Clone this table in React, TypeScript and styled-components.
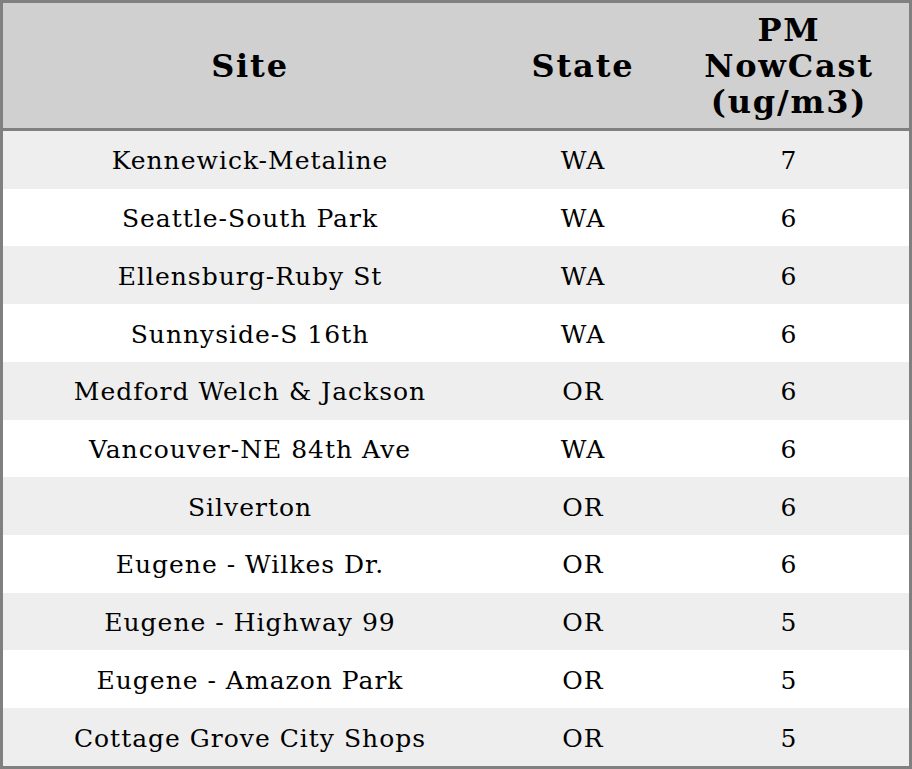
import React from 'react';
import styled, { createGlobalStyle } from 'styled-components';

const GlobalStyle = createGlobalStyle`
  html, body {
    margin: 0;
    padding: 0;
    background: #ffffff;
  }
`;

const Table = styled.table`
  width: 912px;
  height: 769px;
  box-sizing: border-box;
  border-collapse: separate;
  border-spacing: 0;
  border: 3px solid #808080;
  font-family: 'DejaVu Serif', serif;
  color: #000000;
  table-layout: fixed;
`;

const Col = styled.col<{ $w: number }>`
  width: ${(p) => p.$w}px;
`;

const HeadCell = styled.th`
  height: 125px;
  padding: 0;
  background: #d0d0d0;
  border-bottom: 3px solid #808080;
  font-size: 32px;
  font-weight: bold;
  line-height: 36px;
  letter-spacing: 1.8px;
  text-align: center;
  vertical-align: middle;
`;

const Row = styled.tr<{ $odd: boolean }>`
  background: ${(p) => (p.$odd ? '#eeeeee' : '#ffffff')};
`;

const Cell = styled.td`
  height: 55px;
  padding: 2px 0 0;
  font-size: 25px;
  letter-spacing: 1px;
  text-align: center;
  vertical-align: middle;
`;

const rows: [string, string, number][] = [
  ['Kennewick-Metaline', 'WA', 7],
  ['Seattle-South Park', 'WA', 6],
  ['Ellensburg-Ruby St', 'WA', 6],
  ['Sunnyside-S 16th', 'WA', 6],
  ['Medford Welch & Jackson', 'OR', 6],
  ['Vancouver-NE 84th Ave', 'WA', 6],
  ['Silverton', 'OR', 6],
  ['Eugene - Wilkes Dr.', 'OR', 6],
  ['Eugene - Highway 99', 'OR', 5],
  ['Eugene - Amazon Park', 'OR', 5],
  ['Cottage Grove City Shops', 'OR', 5],
];

export default function App() {
  return (
    <>
      <GlobalStyle />
      <Table>
        <colgroup>
          <Col $w={494} />
          <Col $w={172} />
          <Col $w={240} />
        </colgroup>
        <thead>
          <tr>
            <HeadCell>Site</HeadCell>
            <HeadCell>State</HeadCell>
            <HeadCell>
              PM
              <br />
              NowCast
              <br />
              (ug/m3)
            </HeadCell>
          </tr>
        </thead>
        <tbody>
          {rows.map(([site, state, value], i) => (
            <Row key={site} $odd={i % 2 === 0}>
              <Cell>{site}</Cell>
              <Cell>{state}</Cell>
              <Cell>{value}</Cell>
            </Row>
          ))}
        </tbody>
      </Table>
    </>
  );
}
